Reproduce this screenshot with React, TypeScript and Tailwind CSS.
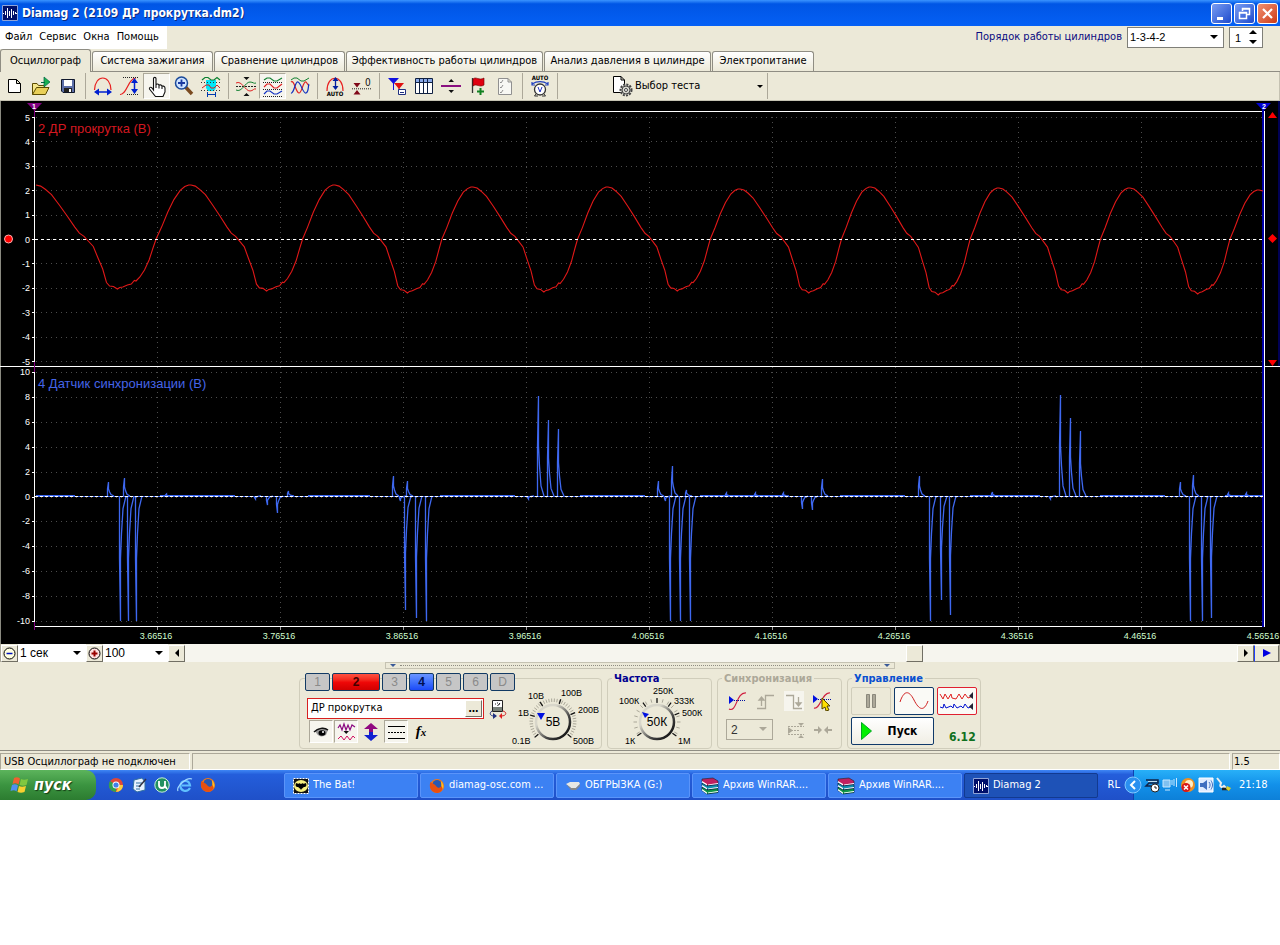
import React from "react";

type Kids = { children?: React.ReactNode };

/* ---------- waveform data ---------- */
const peaks = [
  [36, 185], [191, 185], [335, 185], [473, 187], [608, 187],
  [740, 189], [871, 187], [999, 188], [1130, 188], [1259, 190],
];
const troughs = [289, 291, 293, 292, 291, 293, 295, 293, 294];
// [phase, level] where level 1 is the peak, 0 the zero line and -1 the trough
const cycle = [
  [0, 1], [0.03, 0.98], [0.06, 0.92], [0.1, 0.82], [0.15, 0.63], [0.2, 0.43], [0.25, 0.22],
  [0.28, 0.11], [0.31, 0.05], [0.34, -0.05], [0.37, -0.15], [0.4, -0.38], [0.43, -0.6],
  [0.455, -0.87], [0.475, -0.94], [0.5, -0.95], [0.525, -1], [0.54, -0.97], [0.56, -0.96],
  [0.59, -0.92], [0.615, -0.9], [0.635, -0.83], [0.645, -0.84], [0.67, -0.76], [0.7, -0.62],
  [0.73, -0.42], [0.755, -0.18], [0.775, 0], [0.81, 0.22], [0.85, 0.5], [0.89, 0.73],
  [0.93, 0.9], [0.96, 0.97], [0.985, 1],
];
const redPath = (() => {
  const pts: string[] = [];
  for (let i = 0; i < troughs.length; i++) {
    const [x0, y0] = peaks[i];
    const [x1, y1] = peaks[i + 1];
    cycle.forEach(([t, v]) => {
      const top = t < 0.5 ? y0 : y1;
      const y = v >= 0 ? 239 - v * (239 - top) : 239 - v * (troughs[i] - 239);
      pts.push(`${(x0 + t * (x1 - x0)).toFixed(1)},${y.toFixed(1)}`);
    });
  }
  return `M${pts.join(" L")} L1259,190 L1263,191`;
})();
const spikes = [
  [108, 482], [120, 621], [124, 478], [128, 621], [136, 621], [166, 494], [255, 499], [267, 505],
  [277, 513], [288, 491], [393, 476], [400, 501], [405, 610], [407, 481], [416, 618], [426, 621],
  [528, 499], [538, 396], [548, 420], [558, 429], [658, 481], [665, 501], [670, 621], [672, 466],
  [680, 621], [686, 490], [690, 621], [726, 493], [755, 493], [783, 493], [802, 509], [812, 510], [822, 479],
  [919, 476], [930, 621], [941, 600], [950, 615], [992, 492], [1050, 499], [1060, 395], [1070, 418],
  [1080, 431], [1180, 482], [1190, 621], [1193, 475], [1202, 621], [1211, 618], [1228, 493], [1246, 493],
];
const bluePath = spikes
  .map(([x, y]) => {
    const d = y - 496;
    return `M${x - 0.5},496 L${x - 0.5},${496 + d * 0.5} L${x + 0.5},${y} L${x + 0.5},${496 + d * 0.5} L${x + 1.5},${496 + d * 0.3} L${x + 3},${496 + d * 0.1} L${x + 6},496`;
  })
  .join(" ");
const gridX = [157, 280, 403, 526, 649, 772, 895, 1018, 1141];
const timeLabels = ["3.66516", "3.76516", "3.86516", "3.96516", "4.06516", "4.16516", "4.26516", "4.36516", "4.46516", "4.56516"];
const upper = [5, 4, 3, 2, 1, 0, -1, -2, -3, -4, -5];
const lower = [10, 8, 6, 4, 2, 0, -2, -4, -6, -8, -10];

function Plot() {
  return (
    <svg viewBox="0 101 1280 543" className="block w-full bg-black font-['Liberation_Sans',sans-serif]" role="img" aria-label="Осциллограмма">
      <path d="M0.5 101V644" stroke="#8a8a80" />
      <g stroke="#4c4c4c" strokeDasharray="1 4" shapeRendering="crispEdges">
        {upper.map((v) => <path key={v} d={`M36 ${Math.round(239 - v * 24.4) + 0.5}H1263`} />)}
        {lower.map((v) => <path key={v} d={`M36 ${Math.round(496.5 - v * 12.45) + 0.5}H1263`} />)}
        {gridX.map((x) => <path key={x} d={`M${x + 0.5} 117V626`} />)}
      </g>
      <path d="M0 366.5H1280" stroke="#fff" />
      <path d="M34.5 110V626.5H1264.500V111.5H34" fill="none" stroke="#fff" shapeRendering="crispEdges" />
      <path d="M34.5 105V117M34.5 362V372M34.5 622V630" stroke="#800080" />
      <path d="M1263 106V627" stroke="#0000a8" strokeWidth="2" shapeRendering="crispEdges" />
      <path d="M1279 101V366" stroke="#0000a8" strokeWidth="1" />
      <path d="M27 103H42L34.5 111Z" fill="#800080" />
      <path d="M1256 103H1271L1263.5 111Z" fill="#0000d0" />
      <g fontSize="7" fontWeight="bold" fill="#fff" textAnchor="middle">
        <text x="34" y="109">1</text>
        <text x="1264" y="109">2</text>
      </g>
      <g fontSize="9" fill="#fff" textAnchor="end" stroke="none">
        {upper.map((v) => <text key={v} x="30" y={Math.round(242.5 - v * 24.4)}>{v}</text>)}
        {lower.map((v) => <text key={v} x="30" y={Math.round(499.5 - v * 12.45)}>{v}</text>)}
      </g>
      <g stroke="#fff" shapeRendering="crispEdges">
        {upper.map((v) => <path key={v} d={`M32 ${Math.round(239 - v * 24.4) + 0.5}H35`} />)}
        {lower.map((v) => <path key={v} d={`M32 ${Math.round(496.5 - v * 12.45) + 0.5}H35`} />)}
      </g>
      <g fontSize="9" fill="#d0ffd0" textAnchor="middle">
        {timeLabels.map((t, i) => <text key={t} x={156 + i * 123} y="639">{t}</text>)}
      </g>
      <g stroke="#999">{gridX.map((x) => <path key={x} d={`M${x + 0.5} 627V630`} />)}</g>
      <g fontSize="13">
        <text x="38" y="133" fill="#d41820">2 ДР прокрутка (В)</text>
        <text x="38" y="388" fill="#4565e8">4 Датчик синхронизации (В)</text>
      </g>
      <path d={redPath} fill="none" stroke="#e01818" strokeWidth="1.1" />
      <path d="M35 239.5H1263" stroke="#fff" strokeDasharray="3 3" shapeRendering="crispEdges" />
      <path d="M36 495.5H75M160 495.5H235M308 495.5H370M440 495.5H515M580 495.5H645M700 495.5H785M840 495.5H905M970 495.5H1040M1100 495.5H1165M1225 495.5H1263" stroke="#3e68f0" />
      <path d={bluePath} fill="none" stroke="#3e68f0" strokeWidth="1.3" />
      <path d="M35 496.5H1263" stroke="#3e68f0" shapeRendering="crispEdges" />
      <path d="M35 496.5H1263" stroke="#fff" strokeDasharray="3 2" shapeRendering="crispEdges" />
      <circle cx="8.500" cy="239" r="4" fill="#f00" stroke="#ffb0b0" />
      <path d="M1268 118L1272.500 112L1277 118ZM1268 360H1277L1272.500 366ZM1272.500 234L1277 238.500L1272.500 243L1268 238.500Z" fill="#f00" />
    </svg>
  );
}

/* ---------- shared pieces ---------- */
function Svg({ children, box = "0 0 24 24", w = "size-6" }: Kids & { box?: string; w?: string }) {
  return (
    <svg viewBox={box} className={`${w} block shrink-0`} fill="none" aria-hidden="true">
      {children}
    </svg>
  );
}

function Tool({ label, pressed, children }: Kids & { label: string; pressed?: boolean }) {
  return (
    <button
      type="button"
      aria-label={label}
      aria-pressed={pressed}
      className={`flex h-[26px] w-[27px] shrink-0 items-center justify-center ${pressed ? "border border-t-[#aca899] border-l-[#aca899] border-r-white border-b-white bg-[#f6f5ee]" : ""}`}
    >
      <Svg>{children}</Svg>
    </button>
  );
}

function Sep() {
  return <span className="mr-[3px] ml-1 h-[26px] w-px shrink-0 bg-[#aca899]" />;
}

function AppIcon() {
  return (
    <Svg box="0 0 16 16" w="size-4">
      <path d="M0.500 0.500H15.500V15.500H0.500Z" fill="#00106a" stroke="#8fa4d8" />
      <path d="M1 8H2M14 8H15M3.500 6V10M5.500 3V13M7.500 6V11M9.500 4V13M11.500 6V10M13.500 7V9" stroke="#fff" strokeWidth="1" shapeRendering="crispEdges" />
    </Svg>
  );
}

const tabs: [string, string][] = [
  ["Система зажигания", "w-[121px]"],
  ["Сравнение цилиндров", "w-[131px]"],
  ["Эффективность работы цилиндров", "w-[197px]"],
  ["Анализ давления в цилиндре", "w-[167px]"],
  ["Электропитание", "w-[102px]"],
];

function TitleBar() {
  return (
    <header className="flex h-[26px] items-center gap-1 bg-linear-to-b from-[#3a93ff] from-0% via-[#0055e5] via-15% to-[#0560f5] px-[2px] text-white">
      <AppIcon />
      <h1 className="grow font-['DejaVu_Sans_Condensed','Noto_Sans',sans-serif] text-[12px] font-bold [text-shadow:1px_1px_0_#0a2a80]">
        Diamag 2 (2109 ДР прокрутка.dm2)
      </h1>
      <div className="flex gap-[2px]">
        <button type="button" aria-label="Свернуть" className="size-[21px] rounded-[3px] border border-white bg-linear-to-br from-[#7a9cf2] to-[#1f48cc]">
          <Svg box="0 0 19 19" w="size-[19px]"><path d="M5 14.500H11" stroke="#fff" strokeWidth="3" /></Svg>
        </button>
        <button type="button" aria-label="Развернуть" className="size-[21px] rounded-[3px] border border-white bg-linear-to-br from-[#7a9cf2] to-[#1f48cc]">
          <Svg box="0 0 19 19" w="size-[19px]"><path d="M7.500 7V4.500H14.500V10.500H12M7.500 5H14.500M4.500 8.500H11.500V14.500H4.500ZM4.500 9H11.500" stroke="#fff" strokeWidth="1.500" /></Svg>
        </button>
        <button type="button" aria-label="Закрыть" className="size-[21px] rounded-[3px] border border-white bg-linear-to-br from-[#f09070] to-[#cc3810]">
          <Svg box="0 0 19 19" w="size-[19px]"><path d="M5 5L14 14M14 5L5 14" stroke="#fff" strokeWidth="2.200" /></Svg>
        </button>
      </div>
    </header>
  );
}

function MenuRow() {
  return (
    <div className="flex h-[23px] items-center justify-between pr-[17px]">
      <nav className="flex h-full items-center gap-[7px] bg-white pr-2 pl-[5px]">
        {["Файл", "Сервис", "Окна", "Помощь"].map((m) => <button key={m} type="button">{m}</button>)}
      </nav>
      <div className="flex items-center gap-[5px]">
        <label htmlFor="order" className="text-[#0a0a80]">Порядок работы цилиндров</label>
        <div className="relative">
          <select id="order" className="block h-[21px] w-[97px] appearance-none border border-[#7f7f78] bg-white pl-[2px] font-['Liberation_Sans',sans-serif] text-[11px] leading-none">
            <option>1-3-4-2</option>
          </select>
          <svg viewBox="0 0 8 4" className="pointer-events-none absolute top-2 right-[6px] w-2" aria-hidden="true"><path d="M0 0H8L4 4Z" /></svg>
        </div>
        <div className="relative">
          <input aria-label="Номер цилиндра" defaultValue="1" className="block h-[21px] w-[34px] border border-[#7f7f78] bg-white pl-[5px] font-['Liberation_Sans',sans-serif] text-[11px]" />
          <svg viewBox="0 0 8 14" className="pointer-events-none absolute top-[3px] right-[6px] w-2" aria-hidden="true"><path d="M0 4H8L4 0ZM0 10H8L4 14Z" /></svg>
        </div>
      </div>
    </div>
  );
}

function TabRow() {
  return (
    <div role="tablist" className="flex h-[23px] items-end gap-px border-b border-[#8f8d83]">
      <button type="button" role="tab" aria-selected="true" className="-mb-px h-[23px] w-[91px] rounded-t-[3px] border border-b-0 border-[#8f8d83] bg-[#ece9d8]">Осциллограф</button>
      {tabs.map(([t, w]) => (
        <button key={t} type="button" role="tab" aria-selected="false" className={`h-5 shrink-0 rounded-t-[3px] border border-b-0 border-[#8f8d83] bg-linear-to-b from-white to-[#ece9d8] whitespace-nowrap ${w}`}>
          {t}
        </button>
      ))}
    </div>
  );
}

function Toolbar() {
  return (
    <div role="toolbar" className="flex h-[29px] items-center border-r border-b border-[#c5c2b2]">
      <Tool label="Новый"><path d="M6.500 5.500H14.500L18.500 9.500V18.500H6.500ZM14.500 5.500V9.500H18.500" fill="#fff" stroke="#000" /></Tool>
      <Tool label="Открыть">
        <path d="M3.500 20.500V9.500H8L9.500 11.500H15.500V13" fill="#f4e68a" stroke="#5a4a00" />
        <path d="M3.500 20.500L7.500 13.500H20L16.500 20.500Z" fill="#e8cf58" stroke="#5a4a00" />
        <path d="M15 3L21 8L15 13Z" fill="#18b050" stroke="#064" strokeWidth="0.700" /><path d="M12 8.500H16" stroke="#064" />
      </Tool>
      <Tool label="Сохранить">
        <path d="M5.500 5.500H18.500V18.500H7L5.500 17Z" fill="#5d6fa8" stroke="#10182c" />
        <path d="M8 6H16V12H8Z" fill="#fff" /><path d="M8 14H16V18H8Z" fill="#222" /><path d="M13 15H15V18H13Z" fill="#fff" />
      </Tool>
      <Sep />
      <Tool label="Масштаб по горизонтали">
        <path d="M3.500 16C4 0 19.500 0 20 16" stroke="#e82020" strokeWidth="1.200" />
        <path d="M5 18H19" stroke="#0020d0" strokeWidth="1.500" /><path d="M3 18L8 14.500V21.500ZM21 18L16 14.500V21.500Z" fill="#0020d0" />
      </Tool>
      <Tool label="Масштаб по вертикали">
        <path d="M2 20.500C9 21 10 4 18 4" stroke="#e82020" strokeWidth="1.200" /><path d="M5 3.500H21M9 20.500H21" stroke="#222" strokeDasharray="1 1" />
        <path d="M16.500 6V18" stroke="#0020d0" strokeWidth="1.500" /><path d="M16.500 4L20 9H13ZM16.500 20L20 15H13Z" fill="#0020d0" />
      </Tool>
      <Tool label="Рука" pressed>
        <path d="M8.500 16V4.500C8.500 3 11 3 11 4.500V11C11 9.500 14 9.500 14 11.500C14 10.500 17 10.500 17 12.500C17 11.500 20 12 20 14V18L18 22.500H10.500L4.500 15C4 13.500 5.500 12.500 7 14ZM11 11V14M14 11.500V14.500M17 12.500V15" fill="#fff" stroke="#111" strokeWidth="1.100" />
      </Tool>
      <Tool label="Лупа">
        <path d="M13.500 13L20 20" stroke="#7a4a20" strokeWidth="3.500" /><circle cx="9.500" cy="9" r="6" fill="#cfe4ff" stroke="#1a4a9a" strokeWidth="1.500" />
        <path d="M6 9H13M9.500 5.500V12.500" stroke="#1a3aa0" strokeWidth="1.800" />
      </Tool>
      <Tool label="Измерение">
        <path d="M7 6H17V14L15 17H9L7 14Z" fill="#00e8f8" />
        <path d="M3 6L6 3.500H9L12 6H15L18 3.500L21 6" stroke="#0a8030" strokeWidth="1.200" /><path d="M3 14L7 11H10L12 14H15L18 11L21 14" stroke="#d02020" /><path d="M2 8.500H22M2 16.500H22" stroke="#333" strokeDasharray="1 2" />
        <path d="M8.500 18V23M16.500 18V23M9 20.500H16" stroke="#003ab0" />
      </Tool>
      <Sep />
      <Tool label="Совместить">
        <path d="M2 12.500H22" stroke="#222" strokeDasharray="2 1" /><path d="M2 9C8 6 11 17 16 17C19 17 20 14 22 15" stroke="#e02020" /><path d="M2 16C8 19 11 8 16 8C19 8 20 10 22 9" stroke="#108030" />
        <path d="M9.500 3H15.500L12.500 6ZM9.500 22H15.500L12.500 19Z" fill="#111" />
      </Tool>
      <Tool label="Разделить" pressed>
        <path d="M3 6L6 4H9L13 7H16L21 4" stroke="#108030" strokeWidth="1.200" /><path d="M3 13L6 10H9L13 14H16L21 10" stroke="#e02020" strokeWidth="1.200" /><path d="M3 20L6 17H9L13 20H16L21 17" stroke="#1030c0" strokeWidth="1.200" />
        <path d="M2 8.500H22M2 15.500H22M2 22.500H22" stroke="#222" strokeDasharray="1 1" />
      </Tool>
      <Tool label="Наложить">
        <path d="M3 6L6 4H9L13 7H16L21 4" stroke="#108030" /><path d="M3 8C6 5 8 19 11 19S15 7 18 8L21 12" stroke="#e02020" strokeWidth="1.200" /><path d="M3 19C6 20 7 7 10 8S15 20 18 19S20 11 21 10" stroke="#1030c0" strokeWidth="1.200" />
      </Tool>
      <Sep />
      <Tool label="Автомасштаб">
        <path d="M4 17C4 0 20 0 20 17" stroke="#e82020" strokeWidth="1.200" /><path d="M12.500 4V15" stroke="#0020a0" strokeWidth="1.300" /><path d="M12.500 3L15.500 7H9.500ZM12.500 16L15.500 12H9.500Z" fill="#0020a0" />
        <text x="12" y="22" fontSize="6" fontWeight="bold" fill="#000" textAnchor="middle">AUTO</text>
      </Tool>
      <Tool label="Обнулить">
        <path d="M3.500 9H10.500L7 13.500ZM3.500 20.500H10.500L7 16Z" fill="#800818" /><path d="M2 14.800H21" stroke="#222" strokeDasharray="1 1" />
        <text x="15" y="12" fontSize="10" fill="#111">0</text>
      </Tool>
      <Sep />
      <Tool label="Маркеры">
        <path d="M3 4H14L8.500 10Z" fill="#1010e0" /><path d="M8.500 4V16" stroke="#1010e0" /><path d="M9 9H19L14 15Z" fill="#e01010" /><path d="M14 9V19" stroke="#e01010" />
        <path d="M13.500 15.500H20.500V20.500H13.500Z" fill="#fff" stroke="#203080" /><path d="M15 18.500H19" stroke="#203080" />
      </Tool>
      <Tool label="Таблица">
        <path d="M3.500 4.500H20.500V19.500H3.500Z" fill="#fff" stroke="#102040" /><path d="M4 5H20V8H4Z" fill="#88a8e8" /><path d="M3.500 8.500H20.500M7.500 5V19M11.500 5V19M15.500 5V19" stroke="#102040" />
      </Tool>
      <Tool label="Линия"><path d="M2 12H22" stroke="#8a1080" strokeWidth="2" /><path d="M9.500 8H15L12.200 5ZM9.500 16H15L12.200 19Z" fill="#111" /></Tool>
      <Tool label="Флажок"><path d="M6.500 4V19" stroke="#333" strokeWidth="1.300" /><path d="M7 5C10 2 13 7 18 4V11C13 14 11 9 7 12Z" fill="#e00010" stroke="#600" strokeWidth="0.600" /><path d="M11 17.500H18M14.500 14V21" stroke="#108020" strokeWidth="2" /></Tool>
      <Tool label="Список">
        <path d="M5.500 4.500H15L18.500 8V20.500H5.500ZM15 4.500V8H18.500" fill="#f8f8f4" stroke="#909090" /><path d="M7 8L8 9L10 6M7 13L8 14L10 11M7 18L8 19L10 16" stroke="#909090" />
      </Tool>
      <Sep />
      <Tool label="Автонастройка">
        <text x="12" y="6" fontSize="6" fontWeight="bold" fill="#000" textAnchor="middle">AUTO</text>
        <circle cx="12" cy="15.500" r="5.500" fill="#fff" stroke="#333" strokeWidth="1.300" /><path d="M10 13L12 18L14 13" stroke="#2030c0" /><path d="M4 10C9 7 15 7 20 10M4 8V11H7M20 8V11H17" stroke="#2040c0" strokeWidth="1.200" /><path d="M8 20L6.500 22H10M16 20L17.500 22H14" stroke="#333" />
      </Tool>
      <Sep />
      <button type="button" className="ml-12 flex h-[26px] w-[154px] items-center gap-[2px]">
        <Svg>
          <path d="M4.500 2.500H12L15.500 6V18.500H4.500ZM12 2.500V6H15.500" fill="#fff" stroke="#000" />
          <circle cx="17" cy="16" r="5.500" fill="#d8d8d0" stroke="#444" strokeWidth="2" strokeDasharray="2 1.200" /><circle cx="17" cy="16" r="4" stroke="#444" /><circle cx="17" cy="16" r="1.500" fill="#fff" stroke="#444" />
        </Svg>
        <span className="grow text-left">Выбор теста</span>
        <Svg box="0 0 6 3" w="w-[6px]"><path d="M0 0H6L3 3Z" fill="#000" /></Svg>
      </button>
      <Sep />
    </div>
  );
}

function MiniButton({ label, children, blue }: Kids & { label: string; blue?: boolean }) {
  return (
    <button type="button" aria-label={label} className={`flex h-[17px] shrink-0 items-center justify-center border border-t-white border-r-[#716f64] border-b-[#716f64] bg-[#ece9d8] ${blue ? "w-[25px] border-l-[#2040ff]" : "w-[17px] border-l-white"}`}>
      {children}
    </button>
  );
}

function MiniSelect({ label, value, w }: { label: string; value: string; w: string }) {
  return (
    <div className={`relative shrink-0 ${w}`}>
      <select aria-label={label} className="block h-[18px] w-full appearance-none bg-white pl-[2px] font-['Liberation_Sans',sans-serif] text-[12px] leading-none">
        <option>{value}</option>
      </select>
      <svg viewBox="0 0 8 4" className="pointer-events-none absolute top-[7px] right-[5px] w-2" aria-hidden="true"><path d="M0 0H8L4 4Z" /></svg>
    </div>
  );
}

function ScrollRow() {
  return (
    <div className="flex h-[18px] items-center border-x border-[#aca899]">
      <MiniButton label="Уменьшить"><Svg box="0 0 15 15" w="size-[15px]"><circle cx="7.500" cy="7.500" r="5.500" fill="#ffffe0" stroke="#000" /><path d="M4.500 7.500H10.500" stroke="#0010c0" strokeWidth="1.500" /></Svg></MiniButton>
      <MiniSelect label="Развёртка" value="1 сек" w="w-[68px]" />
      <MiniButton label="Увеличить"><Svg box="0 0 15 15" w="size-[15px]"><circle cx="7.500" cy="7.500" r="5.500" fill="#ffe0e0" stroke="#000" /><path d="M4.500 7.500H10.500M7.500 4.500V10.500" stroke="#900" strokeWidth="2" /></Svg></MiniButton>
      <MiniSelect label="Масштаб" value="100" w="w-[65px]" />
      <MiniButton label="Назад"><Svg box="0 0 4 8" w="w-1"><path d="M4 0V8L0 4Z" fill="#000" /></Svg></MiniButton>
      <div className="flex h-full grow items-center bg-[#f6f5ee]">
        <span className="grow-[720]" />
        <span className="h-[17px] w-[17px] border border-t-white border-r-[#716f64] border-b-[#716f64] border-l-white bg-[#ece9d8]" />
        <span className="grow-[314]" />
      </div>
      <MiniButton label="Вперёд"><Svg box="0 0 4 8" w="w-1"><path d="M0 0V8L4 4Z" fill="#000" /></Svg></MiniButton>
      <MiniButton label="В конец" blue><Svg box="0 0 8 8" w="w-2"><path d="M0 0V8L8 4Z" fill="#0000e0" /></Svg></MiniButton>
    </div>
  );
}

function Group({ title, tone, w, children }: Kids & { title?: string; tone?: string; w: string }) {
  return (
    <section className={`mt-[9px] h-[71px] shrink-0 rounded-[4px] border border-[#d0cdbb] ${w}`}>
      {title && <h2 className={`-mt-2 ml-1 h-4 w-max bg-[#ece9d8] px-[2px] font-['DejaVu_Sans_Condensed','Noto_Sans',sans-serif] text-[11px] leading-4 font-bold ${tone}`}>{title}</h2>}
      {children}
    </section>
  );
}

const channels: [string, string][] = [
  ["1", "w-[25px] bg-[#c6c6c6] text-[#8a8a8a]"],
  ["2", "w-12 bg-linear-to-b from-[#ff5040] via-[#f00808] to-[#d00000] font-bold text-[#400]"],
  ["3", "w-[25px] bg-[#c6c6c6] text-[#8a8a8a]"],
  ["4", "w-[25px] bg-linear-to-b from-[#6a94ff] to-[#1c48f8] font-bold text-[#001050]"],
  ["5", "w-[25px] bg-[#c6c6c6] text-[#8a8a8a]"],
  ["6", "w-[25px] bg-[#c6c6c6] text-[#8a8a8a]"],
  ["D", "w-[25px] bg-[#c6c6c6] text-[#8a8a8a]"],
];

function Knob({ cx, cy, value, labels, from, to, pointer, ticks, box, w, inner }: {
  cx: number; cy: number; value: string; labels: [string, number, number][]; from: number; to: number; pointer: string; ticks: number; box: string; w: string; inner: number[];
}) {
  const polar = (a: number, r: number) => `${(cx + Math.cos(a) * r).toFixed(1)} ${(cy + Math.sin(a) * r).toFixed(1)}`;
  const id = `ring-${value}`;
  return (
    <svg viewBox={box} className={`shrink-0 font-['Liberation_Sans',sans-serif] ${w}`} role="img" aria-label={value}>
      <defs>
        <linearGradient id={id} x1="0" y1="0" x2="1" y2="1">
          <stop offset="0.3" stopColor="#d8d6ca" /><stop offset="0.65" stopColor="#444" /><stop offset="1" stopColor="#000" />
        </linearGradient>
      </defs>
      {Array.from({ length: ticks }, (_, i) => {
        const a = ((from + ((to - from) * i) / (ticks - 1)) * Math.PI) / 180;
        return <path key={i} d={`M${polar(a, 20)}L${polar(a, 23.5)}`} stroke="#aaa798" strokeWidth="1" />;
      })}
      {inner.map((d) => <path key={d} d={`M${polar((d * Math.PI) / 180, 19)}L${polar((d * Math.PI) / 180, 24)}`} stroke="#111" strokeWidth="1.200" />)}
      <circle cx={cx} cy={cy} r="17" fill="#ece9d8" stroke={`url(#${id})`} strokeWidth="2.500" />
      <path d={pointer} fill="#0010e0" />
      <text x={cx} y={cy + 4} fontSize="12" textAnchor="middle">{value}</text>
      <g fontSize="9">{labels.map(([t, x, y]) => <text key={t} x={x} y={y}>{t}</text>)}</g>
    </svg>
  );
}

function IconButton({ label, pressed, children }: Kids & { label: string; pressed?: boolean }) {
  return (
    <button type="button" aria-label={label} className={`flex h-[23px] w-6 items-center justify-center border ${pressed ? "border-t-[#aca899] border-l-[#aca899] border-r-white border-b-white bg-[#f6f5ee]" : "border-transparent"}`}>
      {children}
    </button>
  );
}

function Controls() {
  return (
    <div className="border-b border-[#8f8d83] pb-px">
      <div className="mx-auto flex h-[7px] w-[510px] items-center justify-between border border-[#c5c2b2] px-1">
        <Svg box="0 0 6 3" w="w-[6px]"><path d="M0 0H6L3 3Z" fill="#3a5a98" /></Svg>
        <span className="mx-1 grow border-t border-dotted border-[#8f8d83]" />
        <Svg box="0 0 6 3" w="w-[6px]"><path d="M0 0H6L3 3Z" fill="#3a5a98" /></Svg>
      </div>
      <div className="flex justify-center gap-[5px]">
        <Group w="w-[303px]">
          <div className="flex items-start">
            <div className="w-[209px] shrink-0 pl-[5px]">
              <div className="-mt-[6px] flex w-max gap-[2px]">
                {channels.map(([c, s]) => (
                  <button key={c} type="button" className={`h-[18px] rounded-[2px] border border-[#123a64] font-['Liberation_Sans',sans-serif] text-[12px] leading-none ${s}`}>{c}</button>
                ))}
              </div>
              <div className="mt-[7px] ml-[2px] flex w-max items-center gap-[5px]">
                <div className="flex h-[21px] w-[177px] border border-[#d82020] bg-white p-px">
                  <input aria-label="Название канала" defaultValue="ДР прокрутка" className="w-full min-w-0 pl-[2px] text-[11px]" />
                  <button type="button" aria-label="Выбрать" className="w-[17px] shrink-0 border border-t-white border-r-[#716f64] border-b-[#716f64] border-l-white bg-[#ece9d8] leading-none font-bold">…</button>
                </div>
                <button type="button" aria-label="Прибор">
                  <Svg box="0 0 18 20" w="h-5 w-[18px]"><path d="M3.500 1.500H13.500V12.500H3.500Z" fill="#fff" stroke="#222" /><path d="M4 8H13V12H4Z" fill="#788078" /><path d="M6 5H7M8 4H9M10 5H11M8.500 7L11 4" stroke="#222" /><path d="M3 12C0 14 1 17 5 17" stroke="#203080" /><path d="M14 12C18 13 18 17 12 17" stroke="#d02020" /><path d="M4 14V20L8 17Z" fill="#203080" /><path d="M13 14V20L10 17Z" fill="#e02020" /></Svg>
                </button>
              </div>
              <div className="mt-px ml-1 flex items-center gap-px">
                <IconButton label="Видимость" pressed><Svg box="0 0 20 20" w="size-5"><path d="M4 9C8 5 14 5 17 8L15 13C12 15 8 15 6 12Z" fill="#999" /><path d="M3 10C7 6 13 5 17 8" stroke="#111" strokeWidth="1.500" /><ellipse cx="11" cy="11" rx="3.500" ry="2.800" fill="#000" /><circle cx="12" cy="10" r="1" fill="#fff" /></Svg></IconButton>
                <IconButton label="Фильтр" pressed><Svg box="0 0 20 20" w="size-5"><path d="M2 6L4 3L6 8L8 2L10 8L12 3L14 8L16 3L19 5" stroke="#8a0880" strokeWidth="1.200" /><path d="M7.500 9H13L10.200 12Z" fill="#111" /><path d="M2 17L5 14L8 18L11 14L14 18L17 14L19 16" stroke="#d01060" /></Svg></IconButton>
                <IconButton label="Инверсия"><Svg box="0 0 20 20" w="size-5"><path d="M10 1L17 7H12V10H8V7H3Z" fill="#900880" /><path d="M10 19L17 13H12V10H8V13H3Z" fill="#1020d0" /></Svg></IconButton>
                <IconButton label="Уровни" pressed><Svg box="0 0 20 20" w="size-5"><path d="M2 4.500H19M2 16.500H19" stroke="#000" /><path d="M2 10.500H19" stroke="#000" strokeDasharray="2 1" /></Svg></IconButton>
                <button type="button" className="w-6 font-['Liberation_Serif',serif] text-[15px] leading-none font-bold italic">f<span className="text-[11px]">x</span></button>
              </div>
            </div>
            <Knob cx={553} cy={722} value="5В" from={140} to={400} ticks={38} box="509 679 92 68" w="h-[68px] w-[92px]" inner={[140, 197, 237, 289, 337, 400]} pointer="M537 713H545L541 720Z"
              labels={[["0.1В", 512, 744], ["1В", 518, 716], ["10В", 528, 699], ["100В", 561, 696], ["200В", 578, 713], ["500В", 573, 744]]} />
          </div>
        </Group>
        <Group title="Частота" tone="text-[#000090]" w="w-[105px]">
          <div className="-mt-2 flex justify-center">
            <Knob cx={657} cy={722} value="50К" from={150} to={390} ticks={17} box="608 679 103 68" w="h-[68px] w-[103px]" inner={[145, 234, 270, 306, 338, 396]} pointer="M642 712L649 714L645 718Z"
              labels={[["1К", 625, 744], ["100К", 619, 704], ["250К", 653, 694], ["333К", 674, 704], ["500К", 682, 716], ["1М", 678, 744]]} />
          </div>
        </Group>
        <Group title="Синхронизация" tone="text-[#aca899]" w="w-[125px]">
          <div className="mt-1 grid grid-cols-4 justify-items-center px-[5px]">
            <Svg box="0 0 20 20" w="size-5"><path d="M2 18C10 22 9 1 19 2" stroke="#d02040" strokeWidth="1.200" /><path d="M2 5V13L7 9Z" fill="#0010e0" /><path d="M7 9.500H19" stroke="#0010a0" strokeDasharray="1 1" /></Svg>
            <Svg box="0 0 20 20" w="size-5"><path d="M2 17.500H10.500V4.500H19M6.500 15V7M4 9H9L6.500 6Z" stroke="#aca899" strokeWidth="1.300" /></Svg>
            <Svg box="0 0 20 20" w="size-5 bg-[#f6f5ee]"><path d="M2 4.500H9.500V17.500H18M14.500 6V14M12 12H17L14.500 15Z" stroke="#aca899" strokeWidth="1.300" /></Svg>
            <Svg box="0 0 20 20" w="size-5"><path d="M2 17C8 19 10 1 18 2" stroke="#d02040" strokeWidth="1.200" /><path d="M1 4V12L6 8Z" fill="#0010e0" /><path d="M6 8.500H20" stroke="#0010a0" strokeDasharray="1 1" /><path d="M10 7L18 15L15 15L17 19L14 20L13 16L10 18Z" fill="#ffe000" stroke="#554400" /></Svg>
          </div>
          <div className="mt-2 flex items-center pl-2">
            <div className="relative">
              <select aria-label="Канал синхронизации" disabled className="block h-[21px] w-[47px] appearance-none border border-[#aca899] bg-[#ece9d8] pl-1 font-['Liberation_Sans',sans-serif] text-[12px] leading-none text-[#333] opacity-100"><option>2</option></select>
              <svg viewBox="0 0 8 4" className="pointer-events-none absolute top-2 right-[6px] w-2" aria-hidden="true"><path d="M0 0H8L4 4Z" fill="#aca899" /></svg>
            </div>
            <Svg box="0 0 20 20" w="ml-3 size-5"><path d="M3 6.500H19M3 10.500H14M3 14.500H19" stroke="#aca899" strokeDasharray="2 1" /><path d="M3 7V14L8 10.500ZM13 3H19L16 6ZM13 18H19L16 15Z" fill="#aca899" /></Svg>
            <Svg box="0 0 20 20" w="ml-2 size-5"><path d="M1 10H8M19 10H12" stroke="#aca899" strokeWidth="2" /><path d="M5 6V14L9 10ZM15 6V14L11 10Z" fill="#aca899" /></Svg>
          </div>
        </Group>
        <Group title="Управление" tone="text-[#0a50d0]" w="w-[134px]">
          <div className="flex flex-wrap gap-x-[3px] gap-y-[2px] px-[3px]">
            <button type="button" aria-label="Пауза" className="flex h-7 w-10 items-center justify-center rounded-[2px] border border-[#d0cdbb]"><Svg box="0 0 12 16" w="h-4 w-3"><path d="M1.500 1.500H4.500V14.500H1.500ZM7.500 1.500H10.500V14.500H7.500Z" fill="#aca899" stroke="#8a887c" /></Svg></button>
            <button type="button" aria-label="Синусоида" className="flex h-7 w-10 items-center justify-center rounded-[2px] border border-[#103a6a] bg-[#fafaf6]"><Svg box="0 0 32 24" w="h-6 w-8"><path d="M2 13C6 1 11 1 16 11S26 23 30 12" stroke="#d02020" /></Svg></button>
            <button type="button" aria-label="Сигналы" className="flex h-7 w-10 items-center justify-center rounded-[2px] border border-[#e02030] bg-[#fafaf6]"><Svg box="0 0 36 24" w="h-6 w-9"><path d="M1 5L4 10L6 5L9 10L12 5L13 9L17 10L20 5L23 10L26 5L29 9L34 7" stroke="#e02020" /><path d="M1 18L4 19L5 15L7 19L12 17L14 19L15 15L18 19L22 17L24 19L26 15L29 19L34 17" stroke="#0010d0" /><path d="M34 3V10L30 7ZM34 14V21L30 17.500Z" fill="#223" /></Svg></button>
            <button type="button" className="flex h-7 w-[83px] items-center rounded-[2px] border border-[#103a6a] bg-linear-to-b from-white to-[#f0eee4] pl-[9px] font-['DejaVu_Sans_Condensed','Noto_Sans',sans-serif] text-[12px] font-bold">
              <Svg box="0 0 11 18" w="h-[18px] w-[11px]"><path d="M0.500 0.500V17.500L10.500 9Z" fill="#00f000" stroke="#00a820" /></Svg>
              <span className="grow text-center">Пуск</span>
            </button>
            <output className="ml-3 self-end font-['DejaVu_Sans_Condensed','Noto_Sans',sans-serif] text-[12px] leading-4 font-bold text-[#107020]">6.12</output>
          </div>
        </Group>
      </div>
    </div>
  );
}

function StatusBar() {
  return (
    <footer className="flex h-[19px] gap-[2px] pt-[2px]">
      <span className="w-[190px] border border-t-[#aca899] border-r-white border-b-white border-l-[#aca899] pl-[3px] leading-4">USB Осциллограф не подключен</span>
      <span className="grow border border-t-[#aca899] border-r-white border-b-white border-l-[#aca899]" />
      <span className="w-12 border border-t-[#aca899] border-r-white border-b-white border-l-[#aca899] pl-px leading-4">1.5</span>
    </footer>
  );
}

function Fox() {
  return <Svg box="0 0 16 16" w="size-4"><circle cx="8" cy="8" r="7" fill="#f07818" /><circle cx="8" cy="6.500" r="4.500" fill="#2858b0" /><path d="M1.500 4C3 6 5 5 7 8C9 11 12 10 13 7C15 13 10 16 6 14.500C1 13 0 8 1.500 4Z" fill="#e85010" /><path d="M12 3C14 5 15 8 14 11L12.500 8Z" fill="#ffc020" /></Svg>;
}
function Books() {
  return (
    <Svg box="0 0 18 18" w="size-[18px]">
      <path d="M1 2L12 1L17 4V7L6 8.500L1 5Z" fill="#c02060" stroke="#222" strokeWidth="0.600" />
      <path d="M1 6L6 9L17 7.500V11L6 12.500L1 9Z" fill="#1090b0" stroke="#012" strokeWidth="0.600" />
      <path d="M1 10L6 13L17 11.500V15.500L6 17L1 13.500Z" fill="#109848" stroke="#012" strokeWidth="0.600" />
      <path d="M1 4L6 7V8.500L1 5.500ZM1 8L6 11V12.500L1 9.500ZM1 12L6 15.500V17L1 13.500ZM7 7.500L17 6V7L7 8.300ZM7 11.500L17 10V11L7 12.300ZM7 15.500L17 14V15L7 16.300Z" fill="#fff" />
    </Svg>
  );
}

const tasks: { name: string; icon: React.ReactNode; active?: boolean }[] = [
  { name: "The Bat!", icon: <Svg box="0 0 16 16" w="size-4"><path d="M0.500 0.500H15.500V15.500H0.500Z" fill="#111" stroke="#fff" strokeDasharray="2 1" /><ellipse cx="8" cy="8" rx="7" ry="6" fill="#f8f080" /><path d="M3 5C5 6 6 6 7 5L7.500 6H8.500L9 5C10 6 11 6 13 5C14 8 13 9 11 9C10 10 9 10 8 12C7 10 6 10 5 9C3 9 2 8 3 5Z" fill="#000" /></Svg> },
  { name: "diamag-osc.com ...", icon: <Fox /> },
  { name: "ОБГРЫЗКА (G:)", icon: <Svg box="0 0 16 16" w="size-4"><path d="M1 6L5 4H14L15 6L11 10H6Z" fill="#e8e8e4" /><path d="M1 6L6 10H11L15 6V8L11 12H6Z" fill="#888" /></Svg> },
  { name: "Архив WinRAR....", icon: <Books /> },
  { name: "Архив WinRAR....", icon: <Books /> },
  { name: "Diamag 2", icon: <AppIcon />, active: true },
];

function Taskbar() {
  return (
    <div className="flex h-[30px] items-stretch bg-linear-to-b from-[#3f86f4] from-0% via-[#245edb] via-15% to-[#1f50c8] text-white">
      <button type="button" className="flex w-24 shrink-0 items-center gap-1 rounded-r-[10px] bg-linear-to-b from-[#5cb45c] via-[#3b9440] to-[#2c7c30] pl-[10px] font-['DejaVu_Sans_Condensed','Noto_Sans',sans-serif] text-[16px] font-bold italic [text-shadow:1px_1px_1px_#153c15]">
        <Svg box="0 0 20 20" w="size-5">
          <path d="M4 3C6 2 8 2 10 3.500L8.500 9.500C6.500 8 4.500 8 2.500 9Z" fill="#f06030" /><path d="M11 4C13 5 15 5 18 4L16.500 10C14 11 12 11 9.500 10Z" fill="#80c840" />
          <path d="M2 10C4 9 6 9 8 10.500L6.500 16.500C5 15 3 15 0.500 16Z" fill="#5090f0" /><path d="M9 11C11 12 13 12 16 11L14.500 17C12 18 10 18 7.500 17Z" fill="#f8d030" />
        </Svg>
        пуск
      </button>
      <div className="ml-3 flex w-[176px] shrink-0 items-center gap-[7px]">
        <Svg box="0 0 16 16" w="size-4"><circle cx="8" cy="8" r="7" fill="#e04838" /><path d="M8 8L2 4C-1 9 2 15 8 15Z" fill="#30a050" /><path d="M8 8H15C15 12 12 15 8 15L11 9Z" fill="#f8d040" /><circle cx="8" cy="8" r="3.500" fill="#fff" /><circle cx="8" cy="8" r="2.600" fill="#4080e8" /></Svg>
        <Svg box="0 0 16 16" w="size-4"><path d="M3 3L11 1L14 5V13L6 15L2 12Z" fill="#e8f2ff" stroke="#3070a0" /><path d="M5 6H11M5 9H10M5 12H9" stroke="#3070a0" /><path d="M8 10L15 2" stroke="#334" strokeWidth="1.500" /></Svg>
        <Svg box="0 0 16 16" w="size-4"><circle cx="8" cy="8" r="7.200" fill="#209060" stroke="#c8f0d8" /><path d="M5 4V8C5 12 11 12 11 8V4M11 9L13 12" stroke="#fff" strokeWidth="1.800" /></Svg>
        <Svg box="0 0 16 16" w="size-4"><path d="M13 11C10 16 3 14 3.500 8.500C4 3 12 2 13 8.500H5" stroke="#60c0ff" strokeWidth="2.200" /><path d="M1 14C-1 10 9 0 15 2" stroke="#a0d8ff" strokeWidth="1.200" /></Svg>
        <Fox />
      </div>
      <div className="flex min-w-0 items-center gap-[2px] pt-px">
        {tasks.map((t, i) => (
          <button key={i} type="button" className={`flex h-[25px] w-[134px] min-w-0 items-center gap-1 rounded-[2px] border px-2 text-left whitespace-nowrap ${t.active ? "border-[#123a90] bg-[#1e52b7]" : "border-[#5a94fa] bg-[#3c81f3]"}`}>
            {t.icon}
            <span className="truncate">{t.name}</span>
          </button>
        ))}
      </div>
      <span className="ml-auto flex items-center pr-1">RL</span>
      <div className="flex w-[156px] shrink-0 items-center">
        <Svg box="0 0 18 18" w="relative z-10 size-[18px]"><circle cx="9" cy="9" r="8" fill="#2a90f0" stroke="#80c8ff" /><path d="M11 5L7 9L11 13" stroke="#fff" strokeWidth="2" /></Svg>
        <div className="-ml-[9px] flex h-full grow items-center gap-[2px] border-l border-[#1042af] bg-linear-to-b from-[#28b0f8] via-[#1290e9] to-[#0d80d8] pl-[10px]">
          <Svg box="0 0 16 16" w="size-4"><path d="M2 3H14V6H5L2 9H9" stroke="#124" strokeWidth="1.500" /><path d="M4 4H13V5H4Z" fill="#bde" /><circle cx="11" cy="11" r="4" fill="#fff" stroke="#222" /><path d="M11 9V11H13" stroke="#222" /></Svg>
          <Svg box="0 0 16 16" w="size-4"><path d="M1 3H8V10H1Z" fill="#80c0f0" stroke="#c8e8ff" /><path d="M3 13H8M10 3V8M12 2V9M14.500 1V10" stroke="#c8e8ff" /></Svg>
          <Svg box="0 0 16 16" w="size-4"><circle cx="8" cy="8" r="7" fill="#f09020" /><circle cx="9" cy="7" r="4" fill="#fff0c8" /><circle cx="6" cy="10.500" r="4.500" fill="#d81818" /><path d="M4 8.500L8 12.500M8 8.500L4 12.500" stroke="#fff" strokeWidth="1.500" /></Svg>
          <Svg box="0 0 16 16" w="size-4"><path d="M1 1H15V15H1Z" fill="#e0ecff" stroke="#fff" /><path d="M2 6H5L9 3V13L5 10H2Z" fill="#4070c0" /><path d="M11 5C12.500 7 12.500 9 11 11M13 3.500C15 7 15 9 13 12.500" stroke="#4070c0" /></Svg>
          <Svg box="0 0 16 16" w="size-4"><path d="M1 1L5 6C3 10 6 11 8 9L10 11" stroke="#eee" strokeWidth="2" /><path d="M6 12H14" stroke="#222" strokeWidth="2.500" /><path d="M11 9L15 11L13 14L10 12Z" fill="#d8d030" /></Svg>
          <time className="ml-[5px]">21:18</time>
        </div>
      </div>
    </div>
  );
}

export default function App() {
  return (
    <div className="min-h-screen bg-white font-['DejaVu_Sans_Condensed','Noto_Sans',sans-serif] text-[11px] text-black">
      <main className="bg-[#ece9d8]">
        <TitleBar />
        <MenuRow />
        <TabRow />
        <Toolbar />
        <Plot />
        <ScrollRow />
        <Controls />
        <StatusBar />
      </main>
      <Taskbar />
    </div>
  );
}
